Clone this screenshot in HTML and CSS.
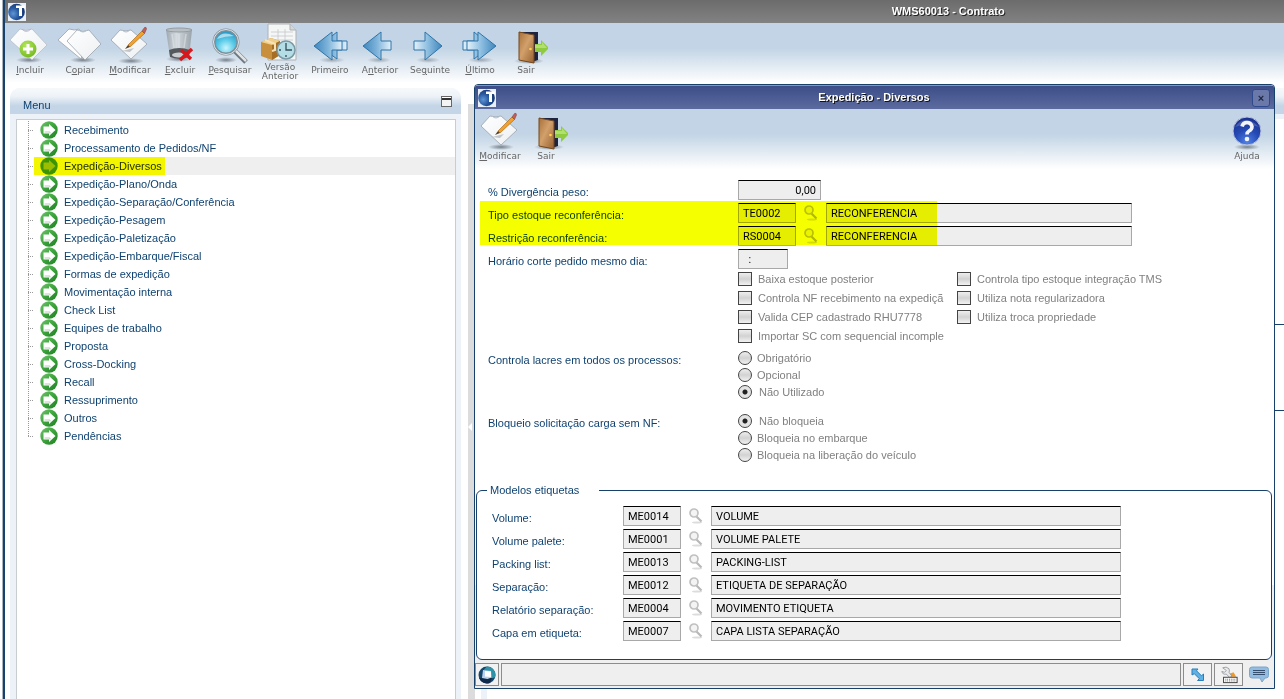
FILE: index.html
```html
<!DOCTYPE html>
<html lang="pt-BR">
<head>
    <meta charset="UTF-8">
    <meta name="viewport" content="width=device-width, initial-scale=1.0">
    <title>WMS60013 - Contrato</title>
    <link rel="stylesheet" href="styles.css">
</head>
<body>
    <!-- icon set -->
    <svg class="sprite" aria-hidden="true">
        <defs>
            <linearGradient id="g-paper" x1="0" y1="0" x2="1" y2="1"><stop offset="0" stop-color="#fff"/><stop offset="1" stop-color="#eceff2"/></linearGradient>
            <linearGradient id="g-left" x1="0" y1="0" x2="1" y2="0"><stop offset="0" stop-color="#3f86bd"/><stop offset=".5" stop-color="#7fb4da"/><stop offset="1" stop-color="#e4f2fb"/></linearGradient>
            <linearGradient id="g-right" x1="0" y1="0" x2="1" y2="0"><stop offset="0" stop-color="#e4f2fb"/><stop offset=".5" stop-color="#8cbde0"/><stop offset="1" stop-color="#3f86bd"/></linearGradient>
            <linearGradient id="g-door" x1="0" y1="0" x2="1" y2="1"><stop offset="0" stop-color="#a8703a"/><stop offset=".45" stop-color="#d2a06b"/><stop offset="1" stop-color="#96602f"/></linearGradient>
            <linearGradient id="g-bin" x1="0" y1="0" x2="1" y2="0"><stop offset="0" stop-color="#9aa2a8"/><stop offset=".4" stop-color="#d6dce0"/><stop offset="1" stop-color="#969ea4"/></linearGradient>
            <linearGradient id="g-node" x1="0" y1="0" x2="1" y2="1"><stop offset="0" stop-color="#6cc46a"/><stop offset=".5" stop-color="#3da33c"/><stop offset="1" stop-color="#1c7f22"/></linearGradient>
            <radialGradient id="g-lens" cx=".5" cy=".75" r=".7"><stop offset="0" stop-color="#c9f6ff"/><stop offset=".5" stop-color="#5ccbe8"/><stop offset="1" stop-color="#2596c4"/></radialGradient>
            <radialGradient id="g-ball" cx=".3" cy=".6" r=".7"><stop offset="0" stop-color="#5f96d6"/><stop offset=".5" stop-color="#28589f"/><stop offset="1" stop-color="#16346f"/></radialGradient>
            <radialGradient id="g-help" cx=".5" cy=".9" r=".9"><stop offset="0" stop-color="#4f82e6"/><stop offset=".5" stop-color="#2549b4"/><stop offset="1" stop-color="#1a2f8c"/></radialGradient>
            <radialGradient id="g-plus" cx=".4" cy=".3" r=".8"><stop offset="0" stop-color="#b4e65a"/><stop offset="1" stop-color="#6fb61c"/></radialGradient>
            <radialGradient id="g-shadow"><stop offset="0" stop-color="#4a5560" stop-opacity=".7"/><stop offset="1" stop-color="#4a5560" stop-opacity="0"/></radialGradient>
        </defs>
        <symbol id="i-logo" viewBox="0 0 18 18">
            <rect width="18" height="18" fill="#e8eef6"/>
            <circle cx="8.500" cy="9" r="8.300" fill="url(#g-ball)"/>
            <path d="M8 2.500h9v2.500h-3v8h-3V5H8z" fill="#fff"/>
        </symbol>
        <symbol id="i-new" viewBox="0 0 44 38">
            <ellipse cx="21" cy="34" rx="13" ry="3" fill="url(#g-shadow)"/>
            <path d="M2 14 12 3q6 3 12 0l15 16-15 15z" fill="url(#g-paper)" stroke="#a9b2ba" stroke-width=".6"/>
            <path d="M14 3q4 5 9 0" fill="none" stroke="#c4a8d4" stroke-width=".8"/>
            <circle cx="20" cy="23" r="8.500" fill="url(#g-plus)"/>
            <path d="M20 18v10M15 23h10" stroke="#fff" stroke-width="3"/>
        </symbol>
        <symbol id="i-copy" viewBox="0 0 44 38">
            <ellipse cx="25" cy="34" rx="13" ry="3" fill="url(#g-shadow)"/>
            <path d="M0 14 11 3q6 2 10 0l7 8-5 22z" fill="#fdfdfd" stroke="#909aa4" stroke-width=".7"/>
            <path d="M9 15 19 4q6 3 12 0l12 14-16 16z" fill="url(#g-paper)" stroke="#909aa4" stroke-width=".7"/>
            <path d="M21 4q4 4 8 0" fill="none" stroke="#b9c2ca"/>
        </symbol>
        <symbol id="i-edit" viewBox="0 0 44 38">
            <ellipse cx="23" cy="35" rx="13" ry="3" fill="url(#g-shadow)"/>
            <path d="M3 14 12 4q6 2 11 0l16 14-16 15z" fill="url(#g-paper)" stroke="#909aa4" stroke-width=".7"/>
            <path d="M14 4q4 4 8 0" fill="none" stroke="#b9c2ca"/>
            <path d="m14 25 12-3-4 4z" fill="#8d959c" opacity=".5"/>
            <path d="m20 19 14-14 2.500 2.500L22 21z" fill="#f0a22c" stroke="#a35f10" stroke-width=".6"/>
            <path d="m17 23 3-4 2 2z" fill="#5c4022"/>
            <path d="m34 5 2.500-3.500q2-1 2 1.500L36.500 7.500z" fill="#c0605a" stroke="#7d3b38" stroke-width=".5"/>
        </symbol>
        <symbol id="i-delete" viewBox="0 0 44 38">
            <ellipse cx="21" cy="33" rx="13" ry="3" fill="url(#g-shadow)"/>
            <path d="M8 4h26l-3 27q-9 4-19 0z" fill="url(#g-bin)" opacity=".9"/>
            <ellipse cx="21" cy="4" rx="13" ry="2" fill="#b9c0c5" stroke="#969da2"/>
            <path d="M14 8l2 14M21 8v14M28 8l-2 14" stroke="#dfe4e7" stroke-width="1.500" opacity=".6"/>
            <path d="M11 24q10-4 21 0l-1 7q-9 4-19 0z" fill="#54595d"/>
            <ellipse cx="21" cy="29" rx="7" ry="2.500" fill="#c9cdd0"/>
            <path d="m23 24 10 9M34 23 22 34" stroke="#d8161c" stroke-width="3.500"/>
        </symbol>
        <symbol id="i-search" viewBox="0 0 44 38">
            <ellipse cx="18" cy="34" rx="11" ry="3" fill="url(#g-shadow)"/>
            <path d="m26 24 12 12" stroke="#6f777e" stroke-width="5"/>
            <path d="m27 24 11 11" stroke="#dfe3e6" stroke-width="2.500"/>
            <circle cx="18" cy="16" r="12" fill="url(#g-lens)" stroke="#7f8d97" stroke-width="3"/>
            <circle cx="18" cy="16" r="12.500" fill="none" stroke="#dfe6ea" stroke-width="1"/>
            <path d="M9 13q5-9 17-3-9 0-17 3z" fill="#fff" opacity=".55"/>
        </symbol>
        <symbol id="i-version" viewBox="0 0 44 38">
            <path d="M10 1h22l6 6v30H10z" fill="#f5f6f6" stroke="#adb2b6"/>
            <path d="M32 1v6h6" fill="#d4d8da" stroke="#adb2b6"/>
            <path d="M13 9h22M13 13h22M13 17h22M13 21h22M20 6v22M27 6v20" stroke="#c4c8cb" stroke-width=".8"/>
            <path d="m3 19 10-4 9 3v14l-8 5-11-4z" fill="#c8903c"/>
            <path d="m3 19 10-4 9 3-8 4z" fill="#f0cf8b"/>
            <path d="M14 22v15l8-5V18z" fill="#a66e24"/>
            <path d="m7 17 10 4v6l-3 1" fill="none" stroke="#f6e2b4" stroke-width="2"/>
            <circle cx="28" cy="27" r="9" fill="#b4dde6" stroke="#7999a4" stroke-width="1.500"/>
            <path d="M28 20v7h6M28 32v2M21 27h2" fill="none" stroke="#33505c" stroke-width="1.300"/>
        </symbol>
        <symbol id="i-first" viewBox="0 0 44 38">
            <ellipse cx="24" cy="34" rx="13" ry="3" fill="url(#g-shadow)" opacity=".6"/>
            <path d="M11 20 29 6v9h10v9H29v9z" fill="url(#g-left)" stroke="#2f74a8"/>
            <path d="M6 20 24 6v9h10v9H24v10z" fill="url(#g-left)" stroke="#2f74a8"/>
        </symbol>
        <symbol id="i-prev" viewBox="0 0 44 38">
            <ellipse cx="21" cy="34" rx="12" ry="3" fill="url(#g-shadow)" opacity=".6"/>
            <path d="M5 20 23 6v9h10v9H23v10z" fill="url(#g-left)" stroke="#2f74a8"/>
        </symbol>
        <symbol id="i-next" viewBox="0 0 44 38">
            <ellipse cx="20" cy="34" rx="12" ry="3" fill="url(#g-shadow)" opacity=".6"/>
            <path d="M34 20 17 6v9H6v9h11v10z" fill="url(#g-right)" stroke="#2f74a8"/>
        </symbol>
        <symbol id="i-last" viewBox="0 0 44 38">
            <ellipse cx="23" cy="34" rx="13" ry="3" fill="url(#g-shadow)" opacity=".6"/>
            <path d="M33 20 16 6v9H5v9h11v9z" fill="url(#g-right)" stroke="#2f74a8"/>
            <path d="M38 20 20 6v9H9v9h11v10z" fill="url(#g-right)" stroke="#2f74a8"/>
        </symbol>
        <symbol id="i-exit" viewBox="0 0 44 38">
            <ellipse cx="25" cy="35" rx="15" ry="3" fill="url(#g-shadow)"/>
            <path d="M15 6h19v28l-6 2z" fill="#1e2340"/>
            <path d="M15 6l15 3v28l-15-3z" fill="url(#g-door)" stroke="#75481d"/>
            <circle cx="26.500" cy="23" r="1.300" fill="#ffd24a"/>
            <path d="M31 18h6v-4l8 8-8 8v-4h-6z" fill="#8fcb3f"/>
            <path d="M31 19h7v-3l5 6H31z" fill="#b2df70"/>
        </symbol>
        <symbol id="i-help" viewBox="0 0 44 38">
            <ellipse cx="22" cy="35" rx="13" ry="3" fill="url(#g-shadow)"/>
            <circle cx="22" cy="19" r="14" fill="url(#g-help)" stroke="#b9c4de" stroke-width="1"/>
            <path d="M10 15q10-14 24 0-12-5-24 0z" fill="#fff" opacity=".18"/>
            <path d="M17 14.500q1-4 5-4t5 4q0 3-3 4.500-2 1.200-2 3.500" fill="none" stroke="#f2f4f8" stroke-width="3.600"/>
            <circle cx="22" cy="27" r="2.300" fill="#f2f4f8"/>
        </symbol>
        <symbol id="i-node" viewBox="0 0 18 18">
            <circle cx="9" cy="9" r="8.700" fill="url(#g-node)"/>
            <path d="M3.500 5.500h5.500V3L15.500 9 9 15v-2.500H3.500z" fill="#fff"/>
            <path d="M4.500 11h5.500v1.500" fill="none" stroke="#b9cdb9"/>
        </symbol>
        <symbol id="i-node-on" viewBox="0 0 18 18">
            <circle cx="9" cy="9" r="8.700" fill="#3d9300"/>
            <path d="M3.500 5.500h5.500V3L15.500 9 9 15v-2.500H3.500z" fill="#9dbd00"/>
        </symbol>
        <symbol id="i-zoom" viewBox="0 0 16 16">
            <ellipse cx="9" cy="14.500" rx="5" ry="1" fill="#dcdcdc"/>
            <path d="m8.500 8.500 5 5" stroke="#b8b8b8" stroke-width="2.200"/>
            <circle cx="6" cy="5" r="4" fill="#f4f4f4" stroke="#c0c0c0" stroke-width="1.700"/>
        </symbol>
        <symbol id="i-globe" viewBox="0 0 18 18">
            <circle cx="9" cy="9" r="8.500" fill="#17466b"/>
            <path d="M9 .5a8.500 8.500 0 0 1 8 11l-5 1-6-9z" fill="#2f93a8"/>
            <path d="M1 12a8.500 8.500 0 0 0 11 5l2-5H5z" fill="#0f2b4c"/>
            <path d="m5 4 8 1 .5 6.500-4 1.500L4 12z" fill="#bcd3ee"/>
            <path d="m7 5 6 .5v5.500L7 10.500z" fill="#fff"/>
        </symbol>
        <symbol id="i-resize" viewBox="0 0 16 16">
            <path d="M2 2h6L6.500 3.800l5 5L13.500 7v6.500h-6l1.800-1.800-5-5L2 8z" fill="#5eb2e6" stroke="#2a7db8"/>
        </symbol>
        <symbol id="i-tools" viewBox="0 0 20 20">
            <path d="m10 9 5-2 3 5h-7z" fill="#f09a2a"/>
            <path d="M3 2q4-2 7 1 1 3 0 4l3 4-2 2-4-4q-4 1-5-3l3 1 2-2z" fill="#e8eaec" stroke="#85898d" stroke-width=".8"/>
            <rect x="4" y="12.500" width="15" height="6" fill="#fff" stroke="#333"/>
            <path d="M6 14.700h11M6 16.600h11" stroke="#555" stroke-dasharray="1 1"/>
        </symbol>
        <symbol id="i-chat" viewBox="0 0 20 18">
            <path d="M3 1h14q2.500 0 2.500 2.500v6Q19.500 12 17 12h-1l-3 4-2-4H3Q.5 12 .5 9.500v-6Q.5 1 3 1z" fill="#93bde0" stroke="#7aa5cb"/>
            <path d="M4 4.500h12M4 6.500h12M4 8.500h12" stroke="#34506e" stroke-width="1"/>
        </symbol>
    </svg>

    <div class="app">
        <header class="titlebar">
            <svg class="logo"><use href="#i-logo"/></svg>
            <h1>WMS60013 - Contrato</h1>
        </header>

        <nav class="toolbar">
            <button class="tool"><svg><use href="#i-new"/></svg><span><u>I</u>ncluir</span></button>
            <button class="tool"><svg><use href="#i-copy"/></svg><span>C<u>o</u>piar</span></button>
            <button class="tool"><svg><use href="#i-edit"/></svg><span><u>M</u>odificar</span></button>
            <button class="tool"><svg><use href="#i-delete"/></svg><span><u>E</u>xcluir</span></button>
            <button class="tool"><svg><use href="#i-search"/></svg><span><u>P</u>esquisar</span></button>
            <button class="tool two-lines"><svg><use href="#i-version"/></svg><span>Versão<br>Anterior</span></button>
            <button class="tool"><svg><use href="#i-first"/></svg><span>Primeiro</span></button>
            <button class="tool"><svg><use href="#i-prev"/></svg><span>A<u>n</u>terior</span></button>
            <button class="tool"><svg><use href="#i-next"/></svg><span>Se<u>g</u>uinte</span></button>
            <button class="tool"><svg><use href="#i-last"/></svg><span><u>Ú</u>ltimo</span></button>
            <button class="tool narrow"><svg><use href="#i-exit"/></svg><span>Sair</span></button>
        </nav>

        <main class="workspace">
            <section class="panel menu">
                <div class="panel-head">
                    <h2>Menu</h2>
                    <button class="minimize" aria-label="Minimizar"></button>
                </div>
                <ul class="tree">
                    <li><a href="#"><span><svg><use href="#i-node"/></svg>Recebimento</span></a></li>
                    <li><a href="#"><span><svg><use href="#i-node"/></svg>Processamento de Pedidos/NF</span></a></li>
                    <li><a href="#" class="selected"><span><svg><use href="#i-node-on"/></svg>Expedição-Diversos</span></a></li>
                    <li><a href="#"><span><svg><use href="#i-node"/></svg>Expedição-Plano/Onda</span></a></li>
                    <li><a href="#"><span><svg><use href="#i-node"/></svg>Expedição-Separação/Conferência</span></a></li>
                    <li><a href="#"><span><svg><use href="#i-node"/></svg>Expedição-Pesagem</span></a></li>
                    <li><a href="#"><span><svg><use href="#i-node"/></svg>Expedição-Paletização</span></a></li>
                    <li><a href="#"><span><svg><use href="#i-node"/></svg>Expedição-Embarque/Fiscal</span></a></li>
                    <li><a href="#"><span><svg><use href="#i-node"/></svg>Formas de expedição</span></a></li>
                    <li><a href="#"><span><svg><use href="#i-node"/></svg>Movimentação interna</span></a></li>
                    <li><a href="#"><span><svg><use href="#i-node"/></svg>Check List</span></a></li>
                    <li><a href="#"><span><svg><use href="#i-node"/></svg>Equipes de trabalho</span></a></li>
                    <li><a href="#"><span><svg><use href="#i-node"/></svg>Proposta</span></a></li>
                    <li><a href="#"><span><svg><use href="#i-node"/></svg>Cross-Docking</span></a></li>
                    <li><a href="#"><span><svg><use href="#i-node"/></svg>Recall</span></a></li>
                    <li><a href="#"><span><svg><use href="#i-node"/></svg>Ressuprimento</span></a></li>
                    <li><a href="#"><span><svg><use href="#i-node"/></svg>Outros</span></a></li>
                    <li><a href="#"><span><svg><use href="#i-node"/></svg>Pendências</span></a></li>
                </ul>
            </section>
            <div class="splitter"></div>
            <section class="detail">
                <div class="panel-head"></div>
                <div class="detail-body"><div class="detail-group"></div></div>
            </section>
        </main>
    </div>

    <form class="dialog" role="dialog" aria-labelledby="dialog-title">
        <header class="dialog-title">
            <svg class="logo"><use href="#i-logo"/></svg>
            <h2 id="dialog-title">Expedição - Diversos</h2>
            <button type="button" class="close" aria-label="Fechar">×</button>
        </header>
        <nav class="toolbar">
            <button type="button" class="tool"><svg><use href="#i-edit"/></svg><span><u>M</u>odificar</span></button>
            <button type="button" class="tool narrow"><svg><use href="#i-exit"/></svg><span>Sair</span></button>
            <button type="button" class="tool help"><svg><use href="#i-help"/></svg><span>Ajuda</span></button>
        </nav>

        <div class="fields">
            <div class="row">
                <label for="peso">% Divergência peso:</label>
                <input id="peso" class="number" value="0,00" readonly>
            </div>
            <div class="highlighted">
                <div class="row">
                    <label for="tipo">Tipo estoque reconferência:</label>
                    <input id="tipo" class="code" value="TE0002" readonly>
                    <button type="button" class="lookup" aria-label="Pesquisar tipo"><svg><use href="#i-zoom"/></svg></button>
                    <input class="desc" aria-label="Descrição do tipo" value="RECONFERENCIA" readonly>
                </div>
                <div class="row">
                    <label for="restricao">Restrição reconferência:</label>
                    <input id="restricao" class="code" value="RS0004" readonly>
                    <button type="button" class="lookup" aria-label="Pesquisar restrição"><svg><use href="#i-zoom"/></svg></button>
                    <input class="desc" aria-label="Descrição da restrição" value="RECONFERENCIA" readonly>
                </div>
            </div>
            <div class="row">
                <label for="horario">Horário corte pedido mesmo dia:</label>
                <input id="horario" class="time" value="  :" readonly>
            </div>
        </div>

        <div class="checks">
            <label><input type="checkbox" disabled>Baixa estoque posterior</label>
            <label><input type="checkbox" disabled>Controla tipo estoque integração TMS</label>
            <label><input type="checkbox" disabled>Controla NF recebimento na expediçã</label>
            <label><input type="checkbox" disabled>Utiliza nota regularizadora</label>
            <label><input type="checkbox" disabled>Valida CEP cadastrado RHU7778</label>
            <label><input type="checkbox" disabled>Utiliza troca propriedade</label>
            <label><input type="checkbox" disabled>Importar SC com sequencial incomple</label>
        </div>

        <div class="radios" role="radiogroup" aria-labelledby="lacres">
            <span id="lacres" class="caption">Controla lacres em todos os processos:</span>
            <div>
                <label><input type="radio" name="lacres" disabled>Obrigatório</label>
                <label><input type="radio" name="lacres" disabled>Opcional</label>
                <label><input type="radio" name="lacres" disabled checked>Não Utilizado</label>
            </div>
        </div>
        <div class="radios" role="radiogroup" aria-labelledby="bloqueio">
            <span id="bloqueio" class="caption">Bloqueio solicitação carga sem NF:</span>
            <div>
                <label><input type="radio" name="bloqueio" disabled checked>Não bloqueia</label>
                <label><input type="radio" name="bloqueio" disabled>Bloqueia no embarque</label>
                <label><input type="radio" name="bloqueio" disabled>Bloqueia na liberação do veículo</label>
            </div>
        </div>

        <div class="dialog-bottom">
            <fieldset class="models">
                <legend>Modelos etiquetas</legend>
                <div class="row">
                    <label for="m1">Volume:</label>
                    <input id="m1" class="code" value="ME0014" readonly>
                    <button type="button" class="lookup" aria-label="Pesquisar volume"><svg><use href="#i-zoom"/></svg></button>
                    <input class="desc" aria-label="Descrição volume" value="VOLUME" readonly>
                </div>
                <div class="row">
                    <label for="m2">Volume palete:</label>
                    <input id="m2" class="code" value="ME0001" readonly>
                    <button type="button" class="lookup" aria-label="Pesquisar volume palete"><svg><use href="#i-zoom"/></svg></button>
                    <input class="desc" aria-label="Descrição volume palete" value="VOLUME PALETE" readonly>
                </div>
                <div class="row">
                    <label for="m3">Packing list:</label>
                    <input id="m3" class="code" value="ME0013" readonly>
                    <button type="button" class="lookup" aria-label="Pesquisar packing list"><svg><use href="#i-zoom"/></svg></button>
                    <input class="desc" aria-label="Descrição packing list" value="PACKING-LIST" readonly>
                </div>
                <div class="row">
                    <label for="m4">Separação:</label>
                    <input id="m4" class="code" value="ME0012" readonly>
                    <button type="button" class="lookup" aria-label="Pesquisar separação"><svg><use href="#i-zoom"/></svg></button>
                    <input class="desc" aria-label="Descrição separação" value="ETIQUETA DE SEPARAÇÃO" readonly>
                </div>
                <div class="row">
                    <label for="m5">Relatório separação:</label>
                    <input id="m5" class="code" value="ME0004" readonly>
                    <button type="button" class="lookup" aria-label="Pesquisar relatório"><svg><use href="#i-zoom"/></svg></button>
                    <input class="desc" aria-label="Descrição relatório" value="MOVIMENTO ETIQUETA" readonly>
                </div>
                <div class="row">
                    <label for="m6">Capa em etiqueta:</label>
                    <input id="m6" class="code" value="ME0007" readonly>
                    <button type="button" class="lookup" aria-label="Pesquisar capa"><svg><use href="#i-zoom"/></svg></button>
                    <input class="desc" aria-label="Descrição capa" value="CAPA LISTA SEPARAÇÃO" readonly>
                </div>
            </fieldset>
            <footer class="statusbar">
                <button type="button" class="status-btn globe" aria-label="Sistema"><svg><use href="#i-globe"/></svg></button>
                <div class="status-text"></div>
                <button type="button" class="status-btn" aria-label="Redimensionar"><svg><use href="#i-resize"/></svg></button>
                <button type="button" class="status-btn" aria-label="Ferramentas"><svg class="big"><use href="#i-tools"/></svg></button>
                <button type="button" class="status-btn chat" aria-label="Mensagens"><svg class="big"><use href="#i-chat"/></svg></button>
            </footer>
        </div>
    </form>
</body>
</html>
```

FILE: styles.css
```css
* {
    box-sizing: border-box;
}
body {
    margin: 0;
    background: #fff;
    color: #0f4270;
    font-family: "Liberation Sans", Arial, sans-serif;
    font-size: 11px;
    line-height: 14px;
    overflow: hidden;
}
h1, h2 {
    margin: 0;
    font-size: 11px;
}
button {
    padding: 0;
    border: none;
    background: none;
    font: inherit;
    cursor: pointer;
}
svg {
    display: block;
    overflow: visible;
}
.sprite {
    position: absolute;
    width: 0;
    height: 0;
}
.logo {
    width: 18px;
    height: 18px;
}

/* main window */
.app {
    display: flex;
    flex-direction: column;
    min-height: 100vh;
    margin-left: 2px;
    border-left: 1px solid #a9b3bd;
    box-shadow: inset 2px 0 #17406a;
    padding-left: 2px;
}
.titlebar {
    display: flex;
    align-items: center;
    height: 23px;
    padding: 0 3px;
    background: linear-gradient(#6c6c6c, #828282);
    color: #fff;
    text-shadow: 1px 1px #222;
}
.titlebar h1 {
    padding-left: 68%;
    padding-bottom: 2px;
}
.toolbar {
    display: flex;
    height: 65px;
    background: linear-gradient(#c2d4e5 0, #c2d4e5 25px, #fff 60px);
}
.tool {
    display: flex;
    flex-direction: column;
    align-items: center;
    width: 50px;
    padding-top: 3px;
    color: #666;
    font-family: "DejaVu Sans", sans-serif;
    font-size: 9px;
    line-height: 12px;
}
.tool svg {
    width: 44px;
    height: 38px;
    flex: none;
}
.tool.two-lines {
    padding-top: 0;
    line-height: 9px;
}
.tool.two-lines span {
    padding-top: 2px;
}
.tool.narrow {
    width: 42px;
}
.tool.help {
    width: 44px;
    margin-left: auto;
    margin-right: 5px;
}
.workspace {
    display: flex;
    flex: 1;
}

/* menu panel */
.panel {
    display: flex;
    flex-direction: column;
    width: 451px;
    margin-left: 5px;
    border-radius: 10px 10px 0 0;
    background: #edf2f8;
    overflow: hidden;
}
.panel-head {
    display: flex;
    align-items: center;
    justify-content: space-between;
    height: 26px;
    padding: 8px 9px 0 13px;
    background: linear-gradient(#f6f9fc, #eef3f8 8px, #c3d5e6 18px, #c3d5e6);
}
.panel-head h2 {
    font-weight: normal;
}
.minimize {
    width: 11px;
    height: 11px;
    margin-bottom: 8px;
    border: 1px solid #666;
    background: linear-gradient(#fff 1px, #333 1px, #333 3px, #f4f4f4 3px);
}
.tree {
    flex: 1;
    margin: 5px 5px 0 6px;
    padding: 1px 0 0 11px;
    border: 1px solid #c8cdd2;
    border-bottom: none;
    background: #fff;
    list-style: none;
}
.tree li {
    display: flex;
    align-items: center;
    height: 18px;
    background: repeating-linear-gradient(#999 0, #999 1px, transparent 1px, transparent 2px) no-repeat 0 0 / 1px 18px;
}
.tree li:last-child {
    background-size: 1px 9px;
}
.tree li::before {
    content: "";
    width: 6px;
    height: 1px;
    background: repeating-linear-gradient(90deg, #999 0, #999 1px, transparent 1px, transparent 2px);
}
.tree a {
    display: flex;
    flex: 1;
    color: #0f4270;
    text-decoration: none;
}
.tree span {
    display: flex;
    align-items: center;
    gap: 6px;
    height: 18px;
    padding: 0 3px 0 6px;
}
.tree svg {
    width: 18px;
    height: 18px;
}
.tree .selected {
    background: #efefef;
    color: #1c2b00;
}
.tree .selected span {
    background: #f4f600;
}
.splitter {
    width: 7px;
    margin: 16px 0 0 7px;
    background: #dcdcdc;
}
.splitter::before {
    content: "";
    display: block;
    width: 0;
    margin-top: 319px;
    border: 4px solid transparent;
    border-left: none;
    border-right-color: #fff;
}
.detail {
    display: flex;
    flex-direction: column;
    flex: 1;
    margin-left: 4px;
}
.detail-body {
    flex: 1;
    margin-left: 2px;
    padding-top: 205px;
    border-top: 5px solid #edf2f8;
    border-left: 6px solid #edf2f8;
}
.detail-group {
    height: 87px;
    border: 1px solid #17406a;
    border-width: 1px 0;
}

/* dialog window */
.dialog {
    position: absolute;
    top: 84px;
    left: 474px;
    right: 9px;
    border: 1px solid #17406a;
    border-radius: 4px 4px 0 0;
    background: #fff;
    overflow: hidden;
}
.dialog-title {
    display: flex;
    align-items: center;
    justify-content: space-between;
    height: 24px;
    padding: 0 4px 0 3px;
    border-top: 1px solid #8a94b5;
    background: linear-gradient(#3c4d88, #5c6b9f);
    color: #fff;
    text-shadow: 1px 1px #111;
}
.dialog-title h2 {
    padding-bottom: 2px;
}
.close {
    width: 18px;
    height: 18px;
    border: 1px solid #2f4a8c;
    border-radius: 3px;
    background: #6b79aa;
    color: #1c2440;
    font-weight: bold;
    line-height: 14px;
}
.fields {
    display: flex;
    flex-direction: column;
    gap: 3px;
    padding: 6px 13px 0;
}
.row {
    display: flex;
    height: 20px;
}
.row label {
    width: 250px;
    padding-top: 5px;
}
.row input {
    padding: 1px 4px 0;
    border: 1px solid #a8a8a8;
    border-top-color: #000;
    border-radius: 0;
    background: #eee;
    color: #000;
    font-family: Roboto, sans-serif;
    font-size: 11px;
    outline: none;
}
.row .number {
    width: 83px;
    text-align: right;
}
.row .time {
    width: 50px;
}
.row .code {
    width: 58px;
}
.row .desc {
    width: 306px;
}
.lookup {
    width: 30px;
    padding-left: 7px;
}
.lookup svg {
    width: 16px;
    height: 16px;
}
.highlighted {
    position: relative;
    display: flex;
    flex-direction: column;
    gap: 3px;
}
.highlighted::after {
    content: "";
    position: absolute;
    inset: -2px auto 1px -8px;
    width: 457px;
    background: #f6ff00;
    mix-blend-mode: multiply;
    pointer-events: none;
}
.checks {
    display: grid;
    grid-template-columns: 210px 260px;
    grid-auto-rows: 19px;
    column-gap: 9px;
    margin-left: 263px;
}
.checks label {
    display: flex;
    align-items: center;
    gap: 6px;
    color: #808080;
    white-space: nowrap;
}
.checks input, .radios input {
    appearance: none;
    flex: none;
    width: 14px;
    height: 14px;
    margin: 0;
    border: 1px solid #444;
    background: linear-gradient(#eee, #d2d2d2 50%, #f2f2f2);
}
.radios {
    display: flex;
    margin: 4px 13px 12px;
}
.radios .caption {
    width: 250px;
    padding-top: 4px;
}
.radios label {
    display: flex;
    align-items: center;
    gap: 5px;
    height: 17px;
    color: #808080;
}
.radios input {
    border-radius: 50%;
}
.radios input:checked {
    margin-right: 2px;
    background: radial-gradient(circle, #222 2px, #e4e4e4 3px);
}
.dialog-bottom {
    margin-top: 20px;
    background: linear-gradient(#fff 50%, #efefef 50%);
}
.models {
    display: flex;
    flex-direction: column;
    gap: 3px;
    min-width: 0;
    margin: 0 2px 0 1px;
    padding: 9px 15px 18px;
    border: 1px solid #17406a;
    border-radius: 6px;
    background: #fff;
}
.models legend {
    width: 112px;
    margin-left: -5px;
    padding: 0 0 0 3px;
}
.models .row label {
    width: 131px;
}
.models .desc {
    width: 410px;
}
.statusbar {
    display: flex;
    gap: 2px;
    padding: 3px 2px 2px 0;
}
.status-btn {
    display: flex;
    align-items: center;
    justify-content: center;
    width: 29px;
    height: 23px;
    border: 1px solid #8c8c8c;
    background: #f2f2f2;
}
.status-btn svg {
    width: 16px;
    height: 16px;
}
.status-btn .big {
    width: 20px;
    height: 18px;
}
.status-btn.globe {
    width: 24px;
}
.status-btn.globe svg {
    width: 18px;
    height: 18px;
}
.status-btn.chat {
    width: 27px;
    border: none;
    background: none;
}
.status-text {
    flex: 1;
    border: 1px solid #8c8c8c;
}
```
